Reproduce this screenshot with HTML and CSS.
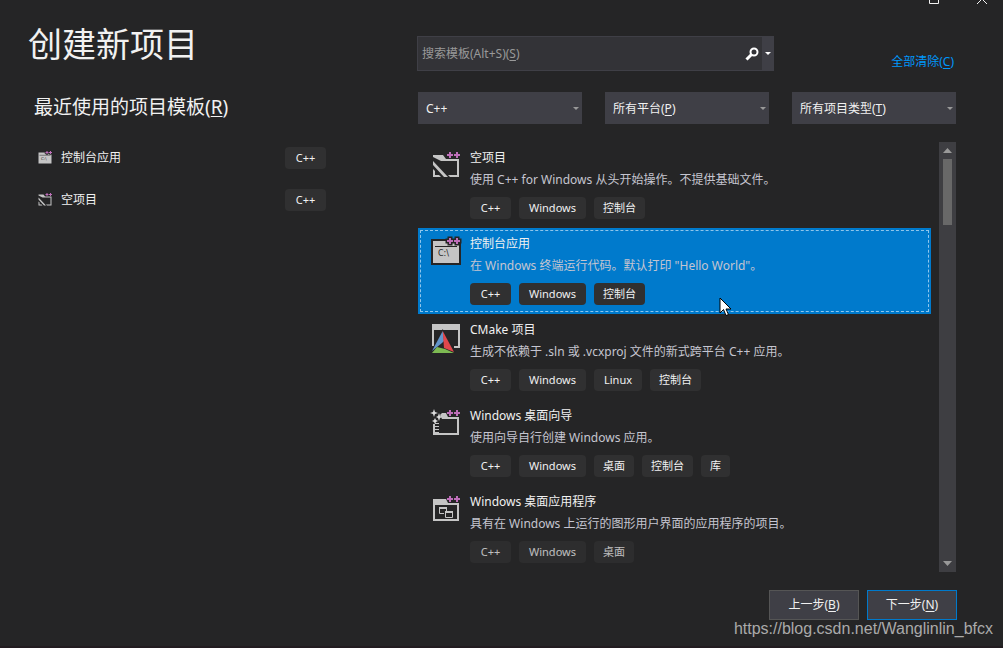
FILE: index.html
```html
<!DOCTYPE html>
<html lang="zh-CN">
<head>
<meta charset="utf-8">
<title>创建新项目</title>
<meta name="viewport" content="width=device-width, initial-scale=1">
<link rel="stylesheet" href="styles.css">
</head>
<body>
<svg class="sprite" aria-hidden="true">
  <symbol id="plus2" viewBox="0 0 32 32">
    <path d="M19 2h2v2h2v2h-2v2h-2v-2h-2v-2h2zM26 2h2v2h2v2h-2v2h-2v-2h-2v-2h2z"/>
  </symbol>
  <symbol id="empty" viewBox="0 0 32 32">
    <path fill="#c5c5c5" d="M3 5h10l3 4h13v18h-9l-2-2h9V11H11L3 7zM3 11l15 16h-4L3 15zM3 19l2 2v4h4l2 2H3z"/>
    <use href="#plus2" width="32" height="32" fill="#bf6fba"/>
  </symbol>
  <symbol id="console" viewBox="0 0 32 32">
    <path fill="#c5c5c5" stroke="#252526" stroke-width="2" d="M2 4h28v24H2z"/>
    <path stroke="#252526" d="M5 10.500h22"/>
    <use href="#plus2" width="32" height="32" fill="#bf6fba" stroke="#252526" stroke-width="3" paint-order="stroke"/>
  </symbol>
  <symbol id="cmake" viewBox="0 0 32 32">
    <path fill="#c5c5c5" d="M2 2h28v24h-6v-2h4V8H4v16H2z"/>
    <path fill="#252526" d="M12.700 7L0 31h26z"/>
    <path fill="#6295cb" d="M12.700 9L2 29l10-8 2-2z"/>
    <path fill="#e0474c" d="M12.700 9L24 30l-10-4z"/>
    <path fill="#7dba52" d="M2 31l5-6 8 2 9 4z"/>
  </symbol>
  <symbol id="wizard" viewBox="0 0 32 32">
    <path fill="#c5c5c5" d="M12 5h4l2 4h11v18H3V16h2v9h22V11H12L10 7z"/>
    <path fill="#c5c5c5" d="M5 15h4v1H5zm0 3h4v1H5zm0 3h4v1H5zm0 3h4v1H5z"/>
    <path fill="#dddddd" d="M4 1l1 3 3 1-3 1-1 3-1-3-3-1 3-1zM9 5l1 3 2 1-2 1-1 3-1-3-2-1 2-1zM5 10l1 2 2 1-2 1-1 2-1-2-2-1 2-1z"/>
    <use href="#plus2" width="32" height="32" fill="#bf6fba"/>
  </symbol>
  <symbol id="desktop" viewBox="0 0 32 32">
    <path fill="#c5c5c5" fill-rule="evenodd" d="M3 5h13l2 4h11v18H3zM5 11v14h22V11z"/>
    <path fill="none" stroke="#c5c5c5" d="M14 19.500H9.500v-6h7V17"/>
    <path fill="none" stroke="#c5c5c5" stroke-width="2" d="M9 14h8M15 18h8"/>
    <path fill="none" stroke="#c5c5c5" d="M15.500 17.500h7v6h-7z"/>
    <use href="#plus2" width="32" height="32" fill="#bf6fba"/>
  </symbol>
</svg>

<div class="window-controls">
  <button type="button" aria-label="最大化"><svg width="12" height="12" viewBox="0 0 12 12"><path d="M1.500 1.500h9v9h-9z" fill="none" stroke="#f1f1f1"/></svg></button>
  <button type="button" aria-label="关闭"><svg width="12" height="12" viewBox="0 0 12 12"><path d="M1 1l10 10M11 1L1 11" stroke="#f1f1f1"/></svg></button>
</div>

<main class="dialog">
  <section class="recent">
    <h1>创建新项目</h1>
    <h2>最近使用的项目模板(<u>R</u>)</h2>
    <ul class="recent-list">
      <li><svg class="icon-small" viewBox="0 0 32 32"><use href="#console"/><text x="8" y="20" class="prompt">C:\</text></svg><span class="recent-name">控制台应用</span><span class="tag latin">C++</span></li>
      <li><svg class="icon-small"><use href="#empty"/></svg><span class="recent-name">空项目</span><span class="tag latin">C++</span></li>
    </ul>
  </section>

  <section class="browse">
    <div class="search-row">
      <div class="search">
        <label for="search">搜索模板(Alt+S)(<u>S</u>)</label>
        <input id="search" type="text">
        <button type="button" class="search-go" aria-label="搜索"><svg width="14" height="14" viewBox="0 0 14 14"><circle cx="9" cy="5" r="3.500" fill="none" stroke="#fff" stroke-width="2"/><path d="M6.500 7.500L1.500 12.500" stroke="#fff" stroke-width="3"/></svg></button>
        <button type="button" class="search-more" aria-label="搜索选项"><svg width="6" height="3" viewBox="0 0 6 3"><path d="M0 0h6L3 3z" fill="#fff"/></svg></button>
      </div>
      <a href="#" class="clear">全部清除(<u>C</u>)</a>
    </div>

    <div class="filters">
      <div class="filter">
        <select aria-label="语言"><option>C++</option></select>
        <svg class="caret" viewBox="0 0 6 3"><path d="M0 0h6L3 3z"/></svg>
      </div>
      <div class="filter">
        <label for="platform">所有平台(<u>P</u>)</label>
        <select id="platform"><option value=""></option></select>
        <svg class="caret" viewBox="0 0 6 3"><path d="M0 0h6L3 3z"/></svg>
      </div>
      <div class="filter">
        <label for="kind">所有项目类型(<u>T</u>)</label>
        <select id="kind"><option value=""></option></select>
        <svg class="caret" viewBox="0 0 6 3"><path d="M0 0h6L3 3z"/></svg>
      </div>
    </div>

    <div class="results">
      <ul class="templates">
        <li class="template">
          <svg class="icon"><use href="#empty"/></svg>
          <div class="info"><h3>空项目</h3><p>使用 C++ for Windows 从头开始操作。不提供基础文件。</p>
            <div class="tags"><span class="tag latin">C++</span><span class="tag latin">Windows</span><span class="tag">控制台</span></div></div>
        </li>
        <li class="template selected">
          <svg class="icon" viewBox="0 0 32 32"><use href="#console"/><text x="8" y="20" class="prompt">C:\</text></svg>
          <div class="info"><h3>控制台应用</h3><p>在 Windows 终端运行代码。默认打印 "Hello World"。</p>
            <div class="tags"><span class="tag latin">C++</span><span class="tag latin">Windows</span><span class="tag">控制台</span></div></div>
          <svg class="cursor" width="13" height="20" viewBox="0 0 13 20"><path d="M1 1v15l3.500-3.500L7 18.500l2.500-1L7 12h5z" fill="#fff" stroke="#000"/></svg>
        </li>
        <li class="template">
          <svg class="icon"><use href="#cmake"/></svg>
          <div class="info"><h3>CMake 项目</h3><p>生成不依赖于 .sln 或 .vcxproj 文件的新式跨平台 C++ 应用。</p>
            <div class="tags"><span class="tag latin">C++</span><span class="tag latin">Windows</span><span class="tag latin">Linux</span><span class="tag">控制台</span></div></div>
        </li>
        <li class="template">
          <svg class="icon"><use href="#wizard"/></svg>
          <div class="info"><h3>Windows 桌面向导</h3><p>使用向导自行创建 Windows 应用。</p>
            <div class="tags"><span class="tag latin">C++</span><span class="tag latin">Windows</span><span class="tag">桌面</span><span class="tag">控制台</span><span class="tag">库</span></div></div>
        </li>
        <li class="template fading">
          <svg class="icon"><use href="#desktop"/></svg>
          <div class="info"><h3>Windows 桌面应用程序</h3><p>具有在 Windows 上运行的图形用户界面的应用程序的项目。</p>
            <div class="tags"><span class="tag latin">C++</span><span class="tag latin">Windows</span><span class="tag">桌面</span></div></div>
        </li>
      </ul>
      <div class="scrollbar">
        <button type="button" aria-label="向上滚动"><svg width="9" height="5" viewBox="0 0 9 5"><path d="M0 5h9L4.500 0z" fill="#999"/></svg></button>
        <div class="thumb"></div>
        <button type="button" aria-label="向下滚动"><svg width="9" height="5" viewBox="0 0 9 5"><path d="M0 0h9L4.500 5z" fill="#999"/></svg></button>
      </div>
    </div>

    <div class="actions">
      <button type="button">上一步(<u>B</u>)</button>
      <button type="button" class="primary">下一步(<u>N</u>)</button>
    </div>
  </section>
</main>
<div class="watermark">https://blog.csdn.net/Wanglinlin_bfcx</div>
</body>
</html>
```
FILE: styles.css
```css
* {
  box-sizing: border-box;
}

body {
  position: relative;
  margin: 0;
  min-height: 100vh;
  overflow: hidden;
  background: #252526;
  border-bottom: 2px solid #221c20;
  color: #f1f1f1;
  font: 12px/18px "Noto Sans", "Noto Sans CJK SC", sans-serif;
}

h1, h2, h3, p, ul {
  margin: 0;
  padding: 0;
  font-weight: 400;
}

ul {
  list-style: none;
}

button, input, select {
  margin: 0;
  padding: 0;
  border: 0;
  border-radius: 0;
  background: none;
  color: inherit;
  font: inherit;
}

button {
  display: flex;
  align-items: center;
  justify-content: center;
}

u {
  text-underline-offset: 2px;
}

.sprite {
  position: absolute;
  width: 0;
  height: 0;
}

.prompt {
  fill: #252526;
  font: 8px "DejaVu Sans", sans-serif;
}

.window-controls {
  position: absolute;
  top: -7px;
  right: 15px;
  display: flex;
  gap: 36px;
}

.dialog {
  display: grid;
  grid-template-columns: minmax(0, 372px) minmax(0, 1fr);
  column-gap: 17px;
  padding: 0 47px 26px 28px;
}

.recent {
  padding-top: 21px;
}

h1 {
  font-size: 34px;
  line-height: 46px;
}

h2 {
  margin: 26px 0 0 6px;
  font-size: 19px;
  line-height: 28px;
}

h3 {
  font-size: 12px;
}

.recent-list {
  display: flex;
  flex-direction: column;
  gap: 20px;
  width: 298px;
  max-width: 100%;
  margin-top: 26px;
  padding-left: 9px;
}

.recent-list li {
  display: flex;
  align-items: center;
  gap: 8px;
}

.recent-name {
  flex: 1;
}

.icon-small {
  width: 16px;
  height: 16px;
}

.tag {
  padding: 0 9px;
  border-radius: 4px;
  background: #303031;
  font-size: 11px;
  line-height: 22px;
}

.latin {
  min-width: 41px;
  padding: 0 10px;
  text-align: center;
}

.browse {
  padding-top: 36px;
}

.search-row {
  display: flex;
  align-items: center;
  justify-content: space-between;
}

.search {
  position: relative;
  display: flex;
  width: 357px;
  height: 35px;
  border: 1px solid #3f3f46;
  background: #333337;
}

.search label {
  position: absolute;
  top: 8px;
  left: 4px;
  color: #999;
  pointer-events: none;
}

.search input {
  flex: 1;
  min-width: 0;
}

.search-go {
  width: 20px;
}

.search-more {
  width: 11px;
  background: #3f3f46;
}

.clear {
  padding: 17px 2px 0 0;
  color: #0097fb;
  text-decoration: none;
}

.filters {
  display: grid;
  grid-template-columns: repeat(3, 1fr);
  gap: 23px;
  margin: 21px 0 0 1px;
}

.filter {
  position: relative;
}

.filter select {
  display: block;
  width: 100%;
  height: 32px;
  padding: 1px 8px 0;
  appearance: none;
  background: #3f3f46;
}

.filter label {
  position: absolute;
  top: 8px;
  left: 8px;
  pointer-events: none;
}

.caret {
  position: absolute;
  top: 15px;
  right: 3px;
  width: 6px;
  height: 3px;
  fill: #999;
  pointer-events: none;
}

.results {
  display: flex;
  gap: 8px;
  margin: 18px 0 0 1px;
}

.templates {
  flex: 1;
  min-width: 0;
}

.template {
  position: relative;
  display: flex;
  gap: 8px;
  padding: 7px 12px 9px;
}

.icon {
  flex: none;
  width: 32px;
  height: 32px;
  margin-top: 1px;
}

.info {
  flex: 1;
  min-width: 0;
}

.info p {
  margin-top: 4px;
  color: #c5c5d0;
}

.tags {
  display: flex;
  flex-wrap: wrap;
  gap: 8px;
  margin-top: 8px;
}

.selected {
  background: #007acc;
  outline: 1px dashed #8fc6ec;
  outline-offset: -3px;
}

.fading .tags {
  opacity: 0.75;
}

.cursor {
  position: absolute;
  top: 69px;
  left: 301px;
}

.scrollbar {
  display: flex;
  flex-direction: column;
  align-items: center;
  width: 17px;
  background: #3e3e42;
}

.scrollbar button {
  width: 17px;
  height: 17px;
}

.scrollbar button:last-child {
  margin-top: auto;
}

.thumb {
  width: 9px;
  height: 66px;
  background: #686868;
}

.actions {
  display: flex;
  justify-content: flex-end;
  gap: 8px;
  margin: 18px -1px 0 0;
}

.actions button {
  width: 90px;
  height: 30px;
  border: 1px solid #555;
  background: #3f3f46;
}

.actions .primary {
  border-color: #007acc;
}

.watermark {
  position: absolute;
  right: 10px;
  bottom: 8px;
  color: #aaa;
  font: 16px/18px "Liberation Sans", Arial, sans-serif;
}
```
